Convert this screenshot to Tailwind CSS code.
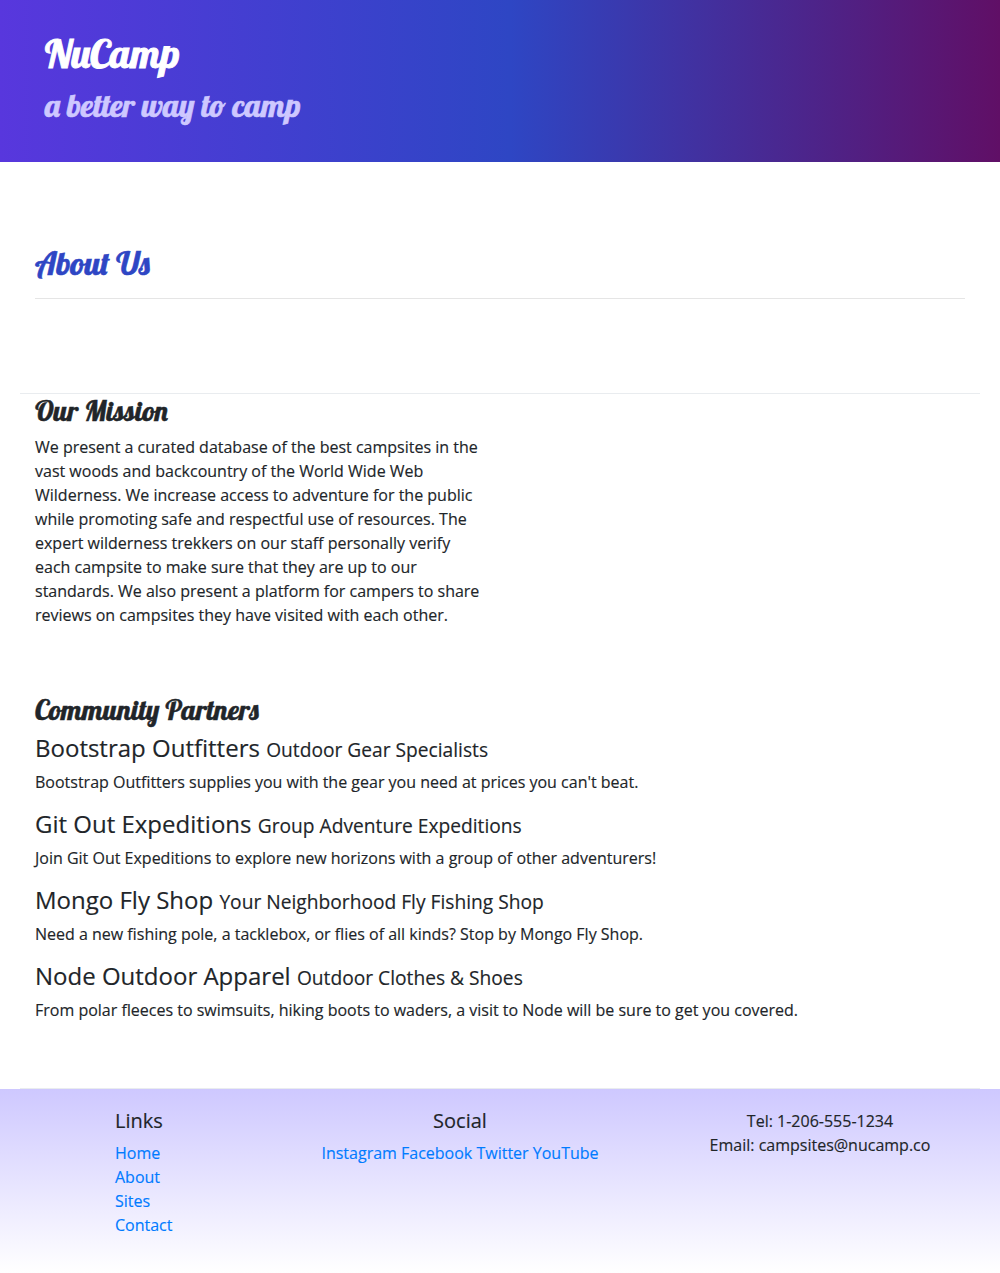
<!DOCTYPE html>
<html lang="en">
<head>
<meta charset="utf-8">
<title>NuCamp: About Us</title>
<script src="https://cdn.jsdelivr.net/npm/@tailwindcss/browser@4"></script>
</head>
<body class="bg-white font-['Open_Sans',sans-serif] text-base leading-6 text-[#212529] [-webkit-text-stroke:0.15px]">
<header class="h-[162px] bg-[linear-gradient(to_right_in_srgb,#5837dd,#2e46c4_51%,#600f66)] px-[45px] pt-[29px]">
  <h1 class="mb-[9px] font-['Lobster',cursive] text-[40px] leading-[48px] font-medium text-white [-webkit-text-stroke:0.9px]">NuCamp</h1>
  <h2 class="font-['Lobster',cursive] text-[32px] leading-[38px] font-medium text-[#cec8ff] [-webkit-text-stroke:0.6px]">a better way to camp</h2>
</header>
<main class="px-5">
  <section class="h-[232px] border-b border-[#e9ecef] px-[15px] pt-[82px]">
    <h2 class="h-[38px] font-['Lobster',cursive] text-[32px] leading-[38px] font-medium text-[#2e46c4] [-webkit-text-stroke:0.6px]">About Us</h2>
    <hr class="mt-4 border-[#e5e5e5]">
  </section>
  <section class="h-[299px] px-[15px]">
    <h3 class="h-[41px] font-['Lobster',cursive] text-[28px] leading-[34px] font-medium [-webkit-text-stroke:0.5px]">Our Mission</h3>
    <p class="w-[450px]">We present a curated database of the best campsites in the vast woods and backcountry of the World Wide Web Wilderness. We increase access to adventure for the public while promoting safe and respectful use of resources. The expert wilderness trekkers on our staff personally verify each campsite to make sure that they are up to our standards. We also present a platform for campers to share reviews on campsites they have visited with each other.</p>
  </section>
  <section class="h-[396px] border-b border-[#e9ecef] px-[15px]">
    <h3 class="h-[41px] font-['Lobster',cursive] text-[28px] leading-[34px] font-medium [-webkit-text-stroke:0.5px]">Community Partners</h3>
    <div class="mb-4"><h4 class="mb-2 h-7 text-2xl leading-[28px]">Bootstrap Outfitters <small class="text-[19.2px]">Outdoor Gear Specialists</small></h4><p>Bootstrap Outfitters supplies you with the gear you need at prices you can't beat.</p></div>
    <div class="mb-4"><h4 class="mb-2 h-7 text-2xl leading-[28px]">Git Out Expeditions <small class="text-[19.2px]">Group Adventure Expeditions</small></h4><p>Join Git Out Expeditions to explore new horizons with a group of other adventurers!</p></div>
    <div class="mb-4"><h4 class="mb-2 h-7 text-2xl leading-[28px]">Mongo Fly Shop <small class="text-[19.2px]">Your Neighborhood Fly Fishing Shop</small></h4><p>Need a new fishing pole, a tacklebox, or flies of all kinds? Stop by Mongo Fly Shop.</p></div>
    <div><h4 class="mb-2 h-7 text-2xl leading-[28px]">Node Outdoor Apparel <small class="text-[19.2px]">Outdoor Clothes &amp; Shoes</small></h4><p>From polar fleeces to swimsuits, hiking boots to waders, a visit to Node will be sure to get you covered.</p></div>
  </section>
</main>
<footer class="flex h-[184px] bg-linear-to-b/srgb from-[#cec8ff] to-white pt-5">
  <nav class="ml-[115px] w-[145px]"><h5 class="mb-2 text-xl leading-6">Links</h5><ul class="text-[#007bff]"><li><a href="#">Home</a></li><li><a href="#">About</a></li><li><a href="#">Sites</a></li><li><a href="#">Contact</a></li></ul></nav>
  <div class="w-[400px] text-center"><h5 class="mb-2 text-xl leading-6">Social</h5><p class="text-[#007bff]"><a href="#">Instagram</a> <a href="#">Facebook</a> <a href="#">Twitter</a> <a href="#">YouTube</a></p></div>
  <address class="w-[320px] text-center not-italic">Tel: 1-206-555-1234<br>Email: campsites@nucamp.co</address>
</footer>
</body>
</html>
